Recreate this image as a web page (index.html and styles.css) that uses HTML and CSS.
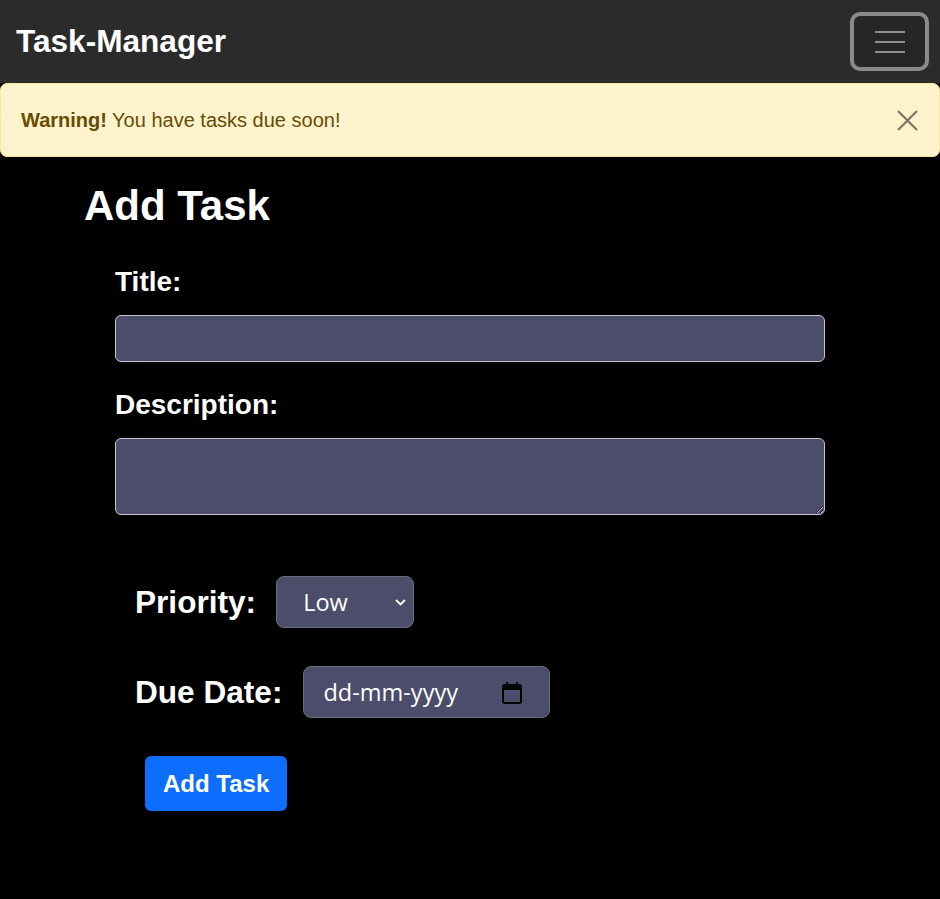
FILE: index.html
```html
<!DOCTYPE html>
<html lang="en">
<head>
<meta charset="utf-8">
<title>Task-Manager</title>
<link rel="stylesheet" href="styles.css">
</head>
<body>
<header class="navbar">
  <span class="brand">Task-Manager</span>
  <button class="toggler" type="button" aria-label="Toggle navigation">
    <svg width="30" height="22" viewBox="0 0 30 22" aria-hidden="true">
      <rect x="0" y="0" width="30" height="2" fill="#8e8e8e"/>
      <rect x="0" y="10" width="30" height="2" fill="#8e8e8e"/>
      <rect x="0" y="20" width="30" height="2" fill="#8e8e8e"/>
    </svg>
  </button>
</header>

<div class="alert">
  <span><strong>Warning!</strong> You have tasks due soon!</span>
  <button class="close" type="button" aria-label="Close">
    <svg width="21" height="21" viewBox="0 0 21 21" aria-hidden="true">
      <path d="M1 1 L20 20 M20 1 L1 20" stroke="#7b7565" stroke-width="2.2" fill="none"/>
    </svg>
  </button>
</div>

<main class="main">
  <h2 class="heading">Add Task</h2>
  <form class="form">
    <label class="label first" for="title">Title:</label>
    <input class="field" id="title" type="text">
    <label class="label second" for="desc">Description:</label>
    <textarea class="field area" id="desc"></textarea>

    <div class="options">
      <div class="row">
        <span class="big-label">Priority:</span>
        <div class="select-wrap">
          <select class="select">
            <option>Low</option>
            <option>Medium</option>
            <option>High</option>
          </select>
          <svg class="chevron" width="11" height="7" viewBox="0 0 11 7" aria-hidden="true">
            <path d="M1 1 L5.5 5.5 L10 1" stroke="#ffffff" stroke-width="1.8" fill="none"/>
          </svg>
        </div>
      </div>
      <div class="row date-row">
        <span class="big-label">Due Date:</span>
        <div class="date">
          <span class="date-text">dd-mm-yyyy</span>
          <svg class="cal" width="20" height="22" viewBox="0 0 20 22" aria-hidden="true">
            <rect x="1" y="3" width="18" height="18" rx="2" fill="none" stroke="#000" stroke-width="2"/>
            <rect x="1" y="3" width="18" height="5" fill="#000"/>
            <rect x="4" y="0" width="2" height="4" fill="#000"/>
            <rect x="14" y="0" width="2" height="4" fill="#000"/>
          </svg>
        </div>
      </div>
      <button class="submit" type="button">Add Task</button>
    </div>
  </form>
</main>
</body>
</html>
```

FILE: styles.css
```css
* {
  box-sizing: border-box;
}

html, body {
  margin: 0;
  padding: 0;
  background: #000000;
  font-family: "Liberation Sans", Arial, sans-serif;
}

body {
  width: 940px;
  min-height: 899px;
}

.navbar {
  height: 83px;
  background: #2b2b2b;
  display: flex;
  align-items: center;
  justify-content: space-between;
  padding: 0 11px 0 16px;
}

.brand {
  color: #ffffff;
  font-weight: bold;
  font-size: 31.6px;
  line-height: 31px;
}

.toggler {
  width: 79px;
  height: 59px;
  border: 4px solid #8a8a8a;
  border-radius: 10px;
  background: #262626;
  display: flex;
  align-items: center;
  justify-content: center;
  padding: 0;
  margin: 0;
}

.toggler svg {
  display: block;
  margin-left: 1px;
}

.alert {
  display: flex;
  align-items: center;
  justify-content: space-between;
  background: #fff3cd;
  border: 1px solid #ffe69c;
  border-radius: 7px;
  color: #664d03;
  font-size: 20px;
  line-height: 30px;
  padding: 21px 21px 21px 20px;
}

.alert strong {
  font-weight: bold;
}

.close {
  background: none;
  border: none;
  padding: 0;
  margin: 0;
  width: 21px;
  height: 21px;
  display: block;
}

.close svg {
  display: block;
}

.main {
  padding: 0 85px;
}

.heading {
  margin: 24px 0 0 -1px;
  color: #ffffff;
  font-size: 42px;
  line-height: 50px;
  font-weight: bold;
}

.form {
  margin-top: 34px;
  padding: 0 30px;
}

.label {
  display: block;
  color: #ffffff;
  font-size: 28px;
  line-height: 34px;
  font-weight: bold;
}

.label.second {
  margin-top: 26px;
}

.field {
  display: block;
  width: 100%;
  height: 47px;
  margin: 16px 0 0 0;
  background: #4c4d6a;
  border: 1px solid #c4c4cc;
  border-radius: 6px;
  color: #ffffff;
  font-family: "Liberation Sans", Arial, sans-serif;
  font-size: 20px;
  padding: 6px 12px;
}

.area {
  height: 77px;
  resize: vertical;
}

.options {
  margin-top: 61px;
  padding-left: 20px;
}

.row {
  display: flex;
  align-items: center;
  gap: 20px;
  height: 52px;
}

.date-row {
  margin-top: 38px;
  gap: 21px;
}

.big-label {
  color: #ffffff;
  font-size: 31.6px;
  line-height: 52px;
  font-weight: bold;
}

.select-wrap {
  position: relative;
  width: 138px;
  height: 52px;
}

.select {
  appearance: none;
  -webkit-appearance: none;
  width: 100%;
  height: 100%;
  background: #4c4d6a;
  border: 1px solid #6c6c7c;
  border-radius: 8px;
  color: #ffffff;
  font-family: "Open Sans", "Noto Sans", sans-serif;
  font-size: 23.5px;
  padding: 0 0 0 26px;
  margin: 0;
}

.chevron {
  position: absolute;
  right: 8px;
  top: 23px;
  pointer-events: none;
}

.date {
  width: 247px;
  height: 52px;
  display: flex;
  align-items: center;
  justify-content: space-between;
  background: #4c4d6a;
  border: 1px solid #6c6c7c;
  border-radius: 8px;
  padding: 0 27px 0 19px;
}

.date-text {
  color: #ffffff;
  font-family: "Open Sans", "Noto Sans", sans-serif;
  font-size: 23.5px;
}

.cal {
  display: block;
  margin-top: 2px;
}

.submit {
  display: block;
  margin: 38px 0 0 10px;
  height: 55px;
  padding: 0 18px;
  background: #0d6efd;
  color: #ffffff;
  border: none;
  border-radius: 6px;
  font-family: "Liberation Sans", Arial, sans-serif;
  font-size: 24px;
  font-weight: bold;
}
```
